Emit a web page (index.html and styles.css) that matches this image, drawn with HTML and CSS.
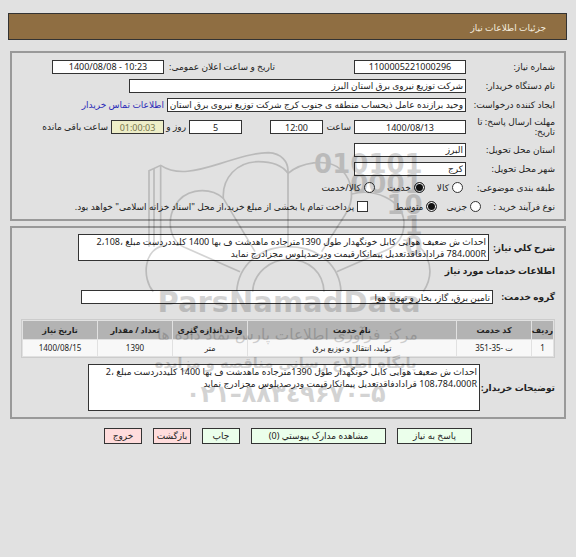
FILE: index.html
```html
<!DOCTYPE html>
<html lang="fa" dir="rtl">
<head>
    <meta charset="UTF-8">
    <meta name="viewport" content="width=device-width, initial-scale=1.0">
    <title>جزئیات اطلاعات نیاز</title>
    <link rel="stylesheet" href="styles.css">
</head>
<body>
    <h1 class="title">جزئیات اطلاعات نیاز</h1>
    <form class="page">
        <div class="panel">
            <div class="row">
                <label class="name" for="number">شماره نیاز:</label>
                <input class="box mid" id="number" type="text" value="1100005221000296" readonly>
                <label class="date-label" for="announce">تاریخ و ساعت اعلان عمومی:</label>
                <input class="box mid" id="announce" type="text" dir="ltr" value="1400/08/08 - 10:23" readonly>
            </div>
            <div class="row">
                <label class="name" for="buyer">نام دستگاه خریدار:</label>
                <input class="box buyer" id="buyer" type="text" value="شرکت توزیع نیروی برق استان البرز" readonly>
            </div>
            <div class="row">
                <label class="name" for="creator">ایجاد کننده درخواست:</label>
                <input class="box creator" id="creator" type="text" value="وحید برازنده عامل ذیحساب منطقه ی جنوب کرج شرکت توزیع نیروی برق استان" readonly>
                <a class="contact" href="#">اطلاعات تماس خریدار</a>
            </div>
            <div class="row deadline">
                <label class="name" for="until">مهلت ارسال پاسخ: تا تاریخ:</label>
                <input class="box mid" id="until" type="text" value="1400/08/13" readonly>
                <label class="unit" for="hour">ساعت</label>
                <input class="box small" id="hour" type="text" value="12:00" readonly>
                <input class="box small days" id="days" type="text" value="5" readonly>
                <label class="unit" for="days">روز و</label>
                <input class="box small timer" id="timer" type="text" value="01:00:03" readonly>
                <label class="left-time" for="timer">ساعت باقی مانده</label>
            </div>
            <div class="row">
                <label class="name" for="province">استان محل تحویل:</label>
                <input class="box place" id="province" type="text" value="البرز" readonly>
            </div>
            <div class="row">
                <label class="name" for="city">شهر محل تحویل:</label>
                <input class="box place" id="city" type="text" value="کرج" readonly>
            </div>
            <div class="row">
                <span class="name">طبقه بندی موضوعی:</span>
                <div class="options">
                    <label><input type="radio" name="subject">کالا</label>
                    <label><input type="radio" name="subject" checked>خدمت</label>
                    <label><input type="radio" name="subject">کالا/خدمت</label>
                </div>
            </div>
            <div class="row">
                <span class="name process">نوع فرآیند خرید :</span>
                <div class="options near">
                    <label><input type="radio" name="process">جزیی</label>
                    <label><input type="radio" name="process" checked>متوسط</label>
                </div>
                <label class="treasury"><input type="checkbox">پرداخت تمام یا بخشی از مبلغ خرید،از محل "اسناد خزانه اسلامی" خواهد بود.</label>
            </div>
        </div>

        <div class="panel second">
            <div class="row">
                <label class="head" for="summary">شرح کلي نیاز:</label>
                <textarea class="box summary" id="summary" readonly>احداث ش ضعیف هوایی کابل خونگهدار طول 1390مترجاده ماهدشت ف بها 1400 کلیددردست مبلغ 2،108،&#8203;784،000R قرادادفاقدتعدیل پیمانکارقیمت ودرصدپلوس مجزادرج نماید</textarea>
            </div>
            <h2 class="head">اطلاعات خدمات مورد نیاز</h2>
            <div class="row group">
                <label class="head" for="group">گروه خدمت:</label>
                <input class="box group-box" id="group" type="text" value="تامین برق، گاز، بخار و تهویه هوا" readonly>
            </div>
            <table class="services">
                <colgroup>
                    <col class="c-index"><col class="c-side"><col><col class="c-side"><col class="c-side"><col class="c-side">
                </colgroup>
                <thead>
                    <tr>
                        <th>ردیف</th>
                        <th>کد خدمت</th>
                        <th>نام خدمت</th>
                        <th>واحد اندازه گیری</th>
                        <th>تعداد / مقدار</th>
                        <th>تاریخ نیاز</th>
                    </tr>
                </thead>
                <tbody>
                    <tr>
                        <td>1</td>
                        <td>ت <bdo dir="ltr">351-35-</bdo></td>
                        <td>تولید، انتقال و توزیع برق</td>
                        <td>متر</td>
                        <td>1390</td>
                        <td>1400/08/15</td>
                    </tr>
                </tbody>
            </table>
            <div class="row">
                <label class="head" for="notes">توضیحات خریدار:</label>
                <textarea class="box notes" id="notes" readonly>احداث ش ضعیف هوایی کابل خونگهدار طول 1390مترجاده ماهدشت ف بها 1400 کلیددردست مبلغ 2،&#8203;108،784،000R قرادادفاقدتعدیل پیمانکارقیمت ودرصدپلوس مجزادرج نماید</textarea>
            </div>
        </div>

        <div class="buttons">
            <button class="answer" type="button">پاسخ به نیاز</button>
            <button class="files" type="button">مشاهده مدارک پیوستي (0)</button>
            <button type="button">چاپ</button>
            <button class="red" type="button">بازگشت</button>
            <button class="red" type="button">خروج</button>
        </div>
    </form>

    <!-- watermark over the whole form -->
    <svg class="watermark" viewBox="0 0 900 840" direction="ltr" aria-hidden="true">
        <g class="lines">
            <path d="M27 320V92L62 76C110 108 170 93 240 71C300 52 345 38 385 38C425 40 444 65 444 92V320"/>
            <path d="M42 320V85M62 318V76"/>
            <path d="M444 100C425 74 390 65 355 65C290 65 246 115 250 175L345 335"/>
            <path d="M444 100C480 70 560 50 605 90C640 125 645 180 615 225L545 335"/>
            <path d="M250 175C225 153 195 149 165 154C110 165 85 220 92 265C98 300 115 315 140 325L300 395"/>
            <path d="M635 162C700 145 785 175 792 245C793 285 775 315 740 330L590 395"/>
            <path d="M75 316C10 325 5 415 40 455M790 300C855 305 895 385 850 455"/>
            <path d="M290 455C295 375 360 320 445 320C540 320 600 380 603 455"/>
            <path d="M338 455C340 400 390 358 445 358C510 358 550 400 552 455"/>
        </g>
        <g class="digits">
            <text x="848" y="98">010101</text>
            <text x="848" y="160">0001</text>
            <text x="848" y="222">10</text>
            <text x="848" y="284">1</text>
            <text x="848" y="346">0</text>
        </g>
        <text class="brand" x="447" y="516">ParsNamadData</text>
        <text class="script" x="442" y="600">مرکز فرآوری اطلاعات پارس نماد داده ها</text>
        <text class="slogan" x="437" y="685">پایگاه اطلاع رسانی مناقصه و مزایده</text>
        <text class="phone" x="437" y="786">۰۲۱–۸۸۳٤۹۶۷۰–۵</text>
    </svg>
</body>
</html>
```

FILE: styles.css
```css
* {
    box-sizing: border-box;
    margin: 0;
    padding: 0;
}
body {
    position: relative;
    padding: 13px 9px 13px 8px;
    background-color: #e1e1e1;
    color: #222;
    font-family: "Noto Sans", "DejaVu Sans", sans-serif;
    font-size: 9px;
    line-height: 10px;
}
input, textarea, button {
    font: inherit;
    color: inherit;
}
.title {
    height: 27px;
    padding: 0 20px;
    border: 1px solid #333;
    background-color: #8f6e42;
    color: #f4ecdf;
    font-size: 9px;
    font-weight: normal;
    line-height: 27px;
}
.page {
    padding: 11px 1px 0 2px;
}
.panel {
    padding: 4px 9px 3px;
    border: 2px solid #999;
}
.row {
    display: flex;
    align-items: center;
    min-height: 19px;
    white-space: nowrap;
}
.name {
    flex: none;
    width: 89px;
}
.deadline {
    min-height: 26px;
}
.deadline .name {
    white-space: normal;
}
.box {
    height: 14px;
    padding: 0 2px;
    border: 1px solid #333;
    background-color: #fff;
    resize: none;
    overflow: hidden;
}
.mid, .place {
    width: 112px;
}
.mid, .small {
    text-align: center;
}
.date-label {
    width: 111px;
    margin-right: 79px;
}
.buyer {
    width: 337px;
}
.creator {
    width: 299px;
}
.contact {
    margin-right: 3px;
    color: #2a2ab8;
    text-decoration: none;
}
.small {
    width: 53px;
}
.unit {
    width: 31px;
    padding-right: 3px;
}
.days {
    margin-right: 28px;
}
.days + .unit {
    width: 25px;
}
.timer {
    background-color: #eeeec8;
    color: #77774f;
}
.left-time {
    margin-right: 3px;
}
.options {
    display: flex;
    gap: 12px;
    padding-right: 3px;
}
.options label, .treasury {
    display: flex;
    align-items: center;
    gap: 3px;
}
.near {
    gap: 9px;
}
.process {
    width: 71px;
}
.treasury {
    margin-right: 27px;
}
input[type="radio"], input[type="checkbox"] {
    appearance: none;
    width: 11px;
    height: 11px;
    border: 1px solid #333;
    background-color: #fff;
}
input[type="radio"] {
    border-radius: 50%;
}
input[type="radio"]:checked {
    background-color: #111;
    box-shadow: inset 0 0 0 1px #fff;
}

.second {
    margin-top: 5px;
    padding: 6px 9px;
}
.head {
    font-size: 9px;
    font-weight: bold;
    line-height: 20px;
}
.second .box {
    flex: none;
    margin-right: auto;
}
textarea.box {
    padding-top: 1px;
    line-height: 12px;
}
.summary {
    width: 411px;
    height: 27px;
    margin-left: 57px;
}
.group {
    min-height: 32px;
}
.group-box {
    width: 412px;
    margin-left: 60px;
}
.services {
    width: 100%;
    border: 1px solid #ccc;
    border-spacing: 1px;
    table-layout: fixed;
    margin: 6px 0;
    text-align: center;
}
.services th {
    height: 18px;
    background-color: #b3b3b3;
    font-size: 8px;
}
.services td {
    height: 16px;
    background-color: #f8f8f8;
    font-size: 8px;
}
.c-index {
    width: 21px;
}
.c-side {
    width: 74px;
}
.notes {
    width: 392px;
    height: 47px;
    margin-left: 67px;
}
.buttons {
    display: flex;
    justify-content: center;
    gap: 11px;
    padding-top: 9px;
}
.buttons button {
    width: 38px;
    height: 16px;
    border: 1px solid #333;
    background-color: #ebffeb;
    white-space: nowrap;
}
.buttons .answer {
    width: 75px;
}
.buttons .files {
    width: 135px;
}
.buttons .red {
    background-color: #ffdcdc;
}

.watermark {
    position: absolute;
    top: 140px;
    left: 50%;
    width: 300px;
    margin-left: -148px;
    opacity: 0.17;
    pointer-events: none;
}
.watermark .lines {
    fill: none;
    stroke: #000;
    stroke-width: 5px;
}
.watermark text {
    direction: ltr;
    text-anchor: middle;
    font-family: "DejaVu Sans", sans-serif;
    font-weight: bold;
}
.watermark .digits text {
    font-size: 78px;
    text-anchor: end;
}
.watermark .brand {
    font-size: 87px;
}
.watermark .script {
    direction: rtl;
    font-size: 46px;
    font-weight: normal;
}
.watermark .slogan {
    direction: rtl;
    font-size: 44px;
}
.watermark .phone {
    font-size: 72px;
    unicode-bidi: bidi-override;
}
```
